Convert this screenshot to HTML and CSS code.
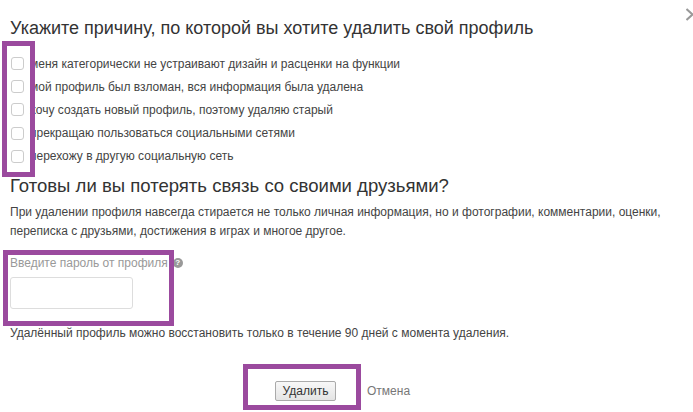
FILE: index.html
```html
<!DOCTYPE html>
<html lang="ru">
<head>
<meta charset="utf-8">
<title>Удаление профиля</title>
<link rel="stylesheet" href="styles.css">
</head>
<body>
<main class="dialog">
  <h2 class="title">Укажите причину, по которой вы хотите удалить свой профиль</h2>
  <ul class="reasons">
    <li class="reason"><span class="check"></span><span>меня категорически не устраивают дизайн и расценки на функции</span></li>
    <li class="reason"><span class="check"></span><span>мой профиль был взломан, вся информация была удалена</span></li>
    <li class="reason"><span class="check"></span><span>хочу создать новый профиль, поэтому удаляю старый</span></li>
    <li class="reason"><span class="check"></span><span>прекращаю пользоваться социальными сетями</span></li>
    <li class="reason"><span class="check"></span><span>перехожу в другую социальную сеть</span></li>
  </ul>
  <h3 class="subtitle">Готовы ли вы потерять связь со своими друзьями?</h3>
  <p class="info">При удалении профиля навсегда стирается не только личная информация, но и фотографии, комментарии, оценки, переписка с друзьями, достижения в играх и многое другое.</p>
  <div class="pass-label"><span>Введите пароль от профиля</span><span class="help">?</span></div>
  <div class="pass-input"></div>
  <p class="note">Удалённый профиль можно восстановить только в течение 90 дней с момента удаления.</p>
  <div class="actions"><button class="delete">Удалить</button><span class="cancel">Отмена</span></div>
</main>
<svg class="close" width="8" height="14" viewBox="0 0 8 14"><path d="M0.5 1 L6.5 6.5 L0.5 12" fill="none" stroke="#999" stroke-width="2"/></svg>
<div class="mark mark-checks"></div>
<div class="mark mark-pass"></div>
<div class="mark mark-btn"></div>
</body>
</html>
```
FILE: styles.css
```css
* { box-sizing: border-box; }
html, body { margin: 0; padding: 0; }
body { width: 693px; height: 412px; overflow: hidden; background: #fff; position: relative; font-family: "Liberation Sans", Arial, sans-serif; color: #333; font-size: 12px; }
.dialog { padding: 17px 10px 0; }
.title { margin: 0; font-size: 18px; font-weight: 400; line-height: 22px; color: #333; }
.reasons { list-style: none; margin: 13px 0 0; padding: 0; }
.reason { display: flex; align-items: center; height: 23.2px; padding-left: 1px; color: #444; line-height: 16px; }
.check { width: 13px; height: 13px; margin-right: 6px; border: 1px solid #ccc; border-radius: 3px; background: #fff; flex: none; }
.subtitle { margin: 7px 0 0; font-size: 18.55px; font-weight: 400; line-height: 22px; color: #333; }
.info { margin: 6px 0 0; line-height: 19px; color: #444; width: 670px; }
.pass-label { margin-top: 14px; height: 16px; line-height: 16px; color: #999; display: flex; align-items: center; }
.help { width: 10px; height: 10px; margin-left: 5px; border-radius: 50%; background: #999; color: #fff; font-size: 8px; font-weight: 700; line-height: 10px; text-align: center; }
.pass-input { margin-top: 6px; width: 123px; height: 32px; border: 1px solid #ddd; border-radius: 3px; background: #fff; }
.note { margin: 16px 0 0; line-height: 16px; color: #444; }
.actions { margin-top: 40px; margin-left: 265px; display: flex; align-items: center; }
.delete { width: 61px; height: 20px; padding: 0; border: 1px solid #aaa; border-radius: 2px; background: linear-gradient(#f8f8f8, #e4e4e4); font-family: inherit; font-size: 12px; color: #333; }
.cancel { margin-left: 31px; color: #777; }
.close { position: absolute; left: 686px; top: 8px; }
.mark { position: absolute; border: 5px solid #9b4a9e; pointer-events: none; }
.mark-checks { left: 2px; top: 41px; width: 33px; height: 136px; }
.mark-pass { left: 3px; top: 250px; width: 171px; height: 76px; }
.mark-btn { left: 243px; top: 364px; width: 118px; height: 46px; }
```
